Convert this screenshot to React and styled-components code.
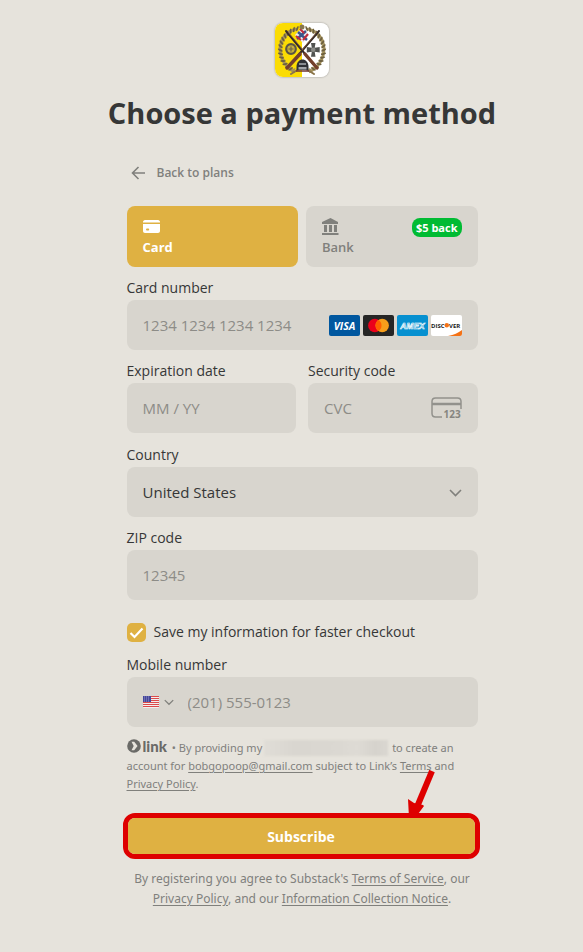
import React from 'react'
import styled, { createGlobalStyle } from 'styled-components'

const GlobalStyle = createGlobalStyle`
  :root {
    --page: #e6e3dc;
    --field: #d8d5ce;
    --gold: #dfb142;
    --ink: #363737;
    --grey: #80807c;
    --green: #00bb33;
    --red: #de0000;
  }

  * {
    box-sizing: border-box;
  }

  body {
    margin: 0;
    background-color: var(--page);
    color: var(--ink);
    font-family: 'Open Sans', 'Noto Sans', sans-serif;
    font-size: 14px;
  }

  button,
  input,
  select {
    font: inherit;
    color: inherit;
  }
`

export default function App() {
  return (
    <>
      <GlobalStyle />
      <Page>
        <PublicationLogo />
        <Title>Choose a payment method</Title>
        <Column>
          <BackLink href="#plans">
            <ArrowLeftIcon />
            Back to plans
          </BackLink>

          <form>
            <MethodRow>
              <MethodButton type="button" $active>
                <CardIcon />
                Card
              </MethodButton>
              <MethodButton type="button">
                <BankIcon />
                Bank
                <Badge>$5 back</Badge>
              </MethodButton>
            </MethodRow>

            <Label htmlFor="number">Card number</Label>
            <Field>
              <Input id="number" placeholder="1234 1234 1234 1234" />
              <Brands>
                <VisaLogo />
                <MastercardLogo />
                <AmexLogo />
                <DiscoverLogo />
              </Brands>
            </Field>

            <SplitRow>
              <div>
                <Label htmlFor="expiry">Expiration date</Label>
                <Field>
                  <Input id="expiry" placeholder="MM / YY" />
                </Field>
              </div>
              <div>
                <Label htmlFor="cvc">Security code</Label>
                <Field>
                  <Input id="cvc" placeholder="CVC" />
                  <CvcIcon />
                </Field>
              </div>
            </SplitRow>

            <Label htmlFor="country">Country</Label>
            <Field>
              <Select id="country" defaultValue="US">
                <option value="US">United States</option>
              </Select>
              <ChevronIcon size={13} />
            </Field>

            <Label htmlFor="zip">ZIP code</Label>
            <Field>
              <Input id="zip" placeholder="12345" />
            </Field>

            <SaveRow>
              <Checkbox type="checkbox" defaultChecked />
              Save my information for faster checkout
            </SaveRow>

            <Label htmlFor="phone">Mobile number</Label>
            <Field>
              <FlagButton type="button" aria-label="United States">
                <FlagIcon />
                <ChevronIcon size={10} />
              </FlagButton>
              <Input id="phone" type="tel" placeholder="(201) 555-0123" />
            </Field>

            <LinkTerms>
              <LinkLogo />
              <LinkName>link</LinkName> • By providing my
              <Redacted /> to create an
              <br />
              account for <a href="#account">bobgopoop@gmail.com</a> subject to
              Link’s <a href="#terms">Terms</a> and
              <br />
              <a href="#privacy">Privacy Policy</a>.
            </LinkTerms>

            <SubmitFrame>
              <SubmitButton type="submit">Subscribe</SubmitButton>
              <Pointer />
            </SubmitFrame>
          </form>

          <Footnote>
            By registering you agree to Substack's{' '}
            <a href="#tos">Terms of Service</a>, our
            <br />
            <a href="#privacy-policy">Privacy Policy</a>, and our{' '}
            <a href="#notice">Information Collection Notice</a>.
          </Footnote>
        </Column>
      </Page>
    </>
  )
}

function PublicationLogo() {
  const angles = [-76, -66, -56, -46, -36, -26, -16, -6, 4, 14, 24, 34, 44, 54, 64]
  return (
    <LogoBox>
      <svg width="54" height="54" viewBox="0 0 54 54" aria-hidden="true">
        <rect width="54" height="54" fill="#fff" />
        <rect width="27" height="54" fill="#fbdc04" />
        {[-1, 1].map((side) => (
          <g key={side} transform={`translate(27 0) scale(${side} 1)`}>
            <path
              d="M5 6C15 7 23 16 22 28C21 38 15 46 7 49"
              fill="none"
              stroke="#a3905a"
              strokeWidth="2.500"
            />
            {angles.map((angle) => {
              const a = (angle * Math.PI) / 180
              const x = 1 + 20.5 * Math.cos(a)
              const y = 27 + 21.5 * Math.sin(a)
              return (
                <g key={angle} transform={`translate(${x} ${y}) rotate(${angle - 35})`}>
                  <ellipse cx="1" cy="-1" rx="2.800" ry="0.900" fill="#6d6040" />
                  <ellipse cx="-1" cy="1" rx="2.400" ry="0.900" fill="#a4925b" />
                </g>
              )
            })}
          </g>
        ))}
        <circle cx="16" cy="26" r="4.800" fill="#c6b13c" stroke="#5a5546" strokeWidth="2.200" />
        <path d="M13.500 26h5M16 23.500v5" stroke="#6b634a" strokeWidth="1.200" />
        <path
          d="M36 20h4.500l-.8 4.800 5-.8v5.500l-5-.8.8 5H36l.8-5-5 .8V24l5 .8z"
          fill="#515351"
        />
        <circle cx="38.200" cy="26.800" r="2.200" fill="#8b8c88" />
        <g strokeLinecap="round" fill="none">
          <path d="M11 8L40 43" stroke="#352b27" strokeWidth="2" />
          <path d="M44 8L14 43" stroke="#352b27" strokeWidth="2" />
          <path d="M30 31L42 45" stroke="#74402c" strokeWidth="3.400" />
          <path d="M25 31L12 45" stroke="#74402c" strokeWidth="3.400" />
          <path d="M13 9L28 27M42 9L27 27" stroke="#8b6044" strokeWidth="0.800" />
          <path d="M16 51L24 46M39 51L31 46" stroke="#8a7449" strokeWidth="2" />
        </g>
        <path d="M27 5l7 7-6 8-8-8z" fill="#e9e7ed" />
        <path d="M23 9l9 8M31 8l-9 8" stroke="#3a558c" strokeWidth="2.500" />
        <path d="M25 6l4 4M33 11l-5 6M21 13l5 4" stroke="#c22b3b" strokeWidth="2" />
        <circle cx="27" cy="4" r="2.500" fill="#87764d" />
        <path d="M21.500 44c0-10 12-10 12 0v3h-12z" fill="#303237" />
        <path d="M24 40h7v2h-7z" fill="#898d92" />
        <path d="M23.500 44h8v2.500h-8z" fill="#a2a5aa" />
        <path d="M21 48h13" stroke="#6c3432" strokeWidth="1.500" />
      </svg>
    </LogoBox>
  )
}

function ArrowLeftIcon() {
  return (
    <svg width="15" height="14" viewBox="0 0 15 14" fill="none" aria-hidden="true">
      <path d="M14 7H1.500M7.500 1L1.500 7l6 6" stroke="#80807c" strokeWidth="1.600" />
    </svg>
  )
}

function CardIcon() {
  return (
    <svg width="17" height="17" viewBox="0 0 17 17" fill="#fff" aria-hidden="true">
      <path d="M0 4.500V4c0-1 .8-2 2-2h13c1.200 0 2 1 2 2v.5z" />
      <path
        fillRule="evenodd"
        d="M0 6h17v7c0 1.200-.8 2-2 2H2c-1.200 0-2-.8-2-2zM4 10.500a1 1 0 0 0 0 2h1.200a1 1 0 0 0 0-2z"
      />
    </svg>
  )
}

function BankIcon() {
  return (
    <svg width="17" height="17" viewBox="0 0 17 17" fill="#80807c" aria-hidden="true">
      <path d="M8.500 0L16 4v2H0V4zM2 7h3v7H2zM7 7h3v7H7zM12 7h3v7h-3zM0 15h16.500v2H0z" />
    </svg>
  )
}

function VisaLogo() {
  return (
    <svg width="31" height="21" viewBox="0 0 31 21" role="img" aria-label="Visa">
      <rect width="31" height="21" rx="2" fill="#00579f" />
      <text
        x="15.500"
        y="14.500"
        fill="#fff"
        fontFamily="Open Sans"
        fontSize="10.500"
        fontStyle="italic"
        fontWeight="700"
        textAnchor="middle"
      >
        VISA
      </text>
    </svg>
  )
}

function MastercardLogo() {
  return (
    <svg width="31" height="21" viewBox="0 0 31 21" role="img" aria-label="Mastercard">
      <rect width="31" height="21" rx="2" fill="#252525" />
      <circle cx="11.800" cy="10.500" r="6.700" fill="#eb001b" />
      <circle cx="19.200" cy="10.500" r="6.700" fill="#f79e1b" />
      <path d="M15.500 4.900a6.700 6.700 0 0 1 0 11.200a6.700 6.700 0 0 1 0-11.200z" fill="#ff5f00" />
    </svg>
  )
}

function AmexLogo() {
  return (
    <svg width="31" height="21" viewBox="0 0 31 21" role="img" aria-label="Amex">
      <rect width="31" height="21" rx="2" fill="#0690d0" />
      <text
        x="15.500"
        y="13.500"
        fill="#0690d0"
        stroke="#fff"
        strokeWidth="0.600"
        fontFamily="Liberation Sans"
        fontSize="8.500"
        fontStyle="italic"
        fontWeight="700"
        textAnchor="middle"
      >
        AMEX
      </text>
    </svg>
  )
}

function DiscoverLogo() {
  return (
    <svg width="31" height="21" viewBox="0 0 31 21" role="img" aria-label="Discover">
      <rect width="31" height="21" rx="2" fill="#fff" />
      <path d="M31 15v4a2 2 0 0 1-2 2H17c6-1 10-3 14-6z" fill="#f47216" />
      <g fill="#222" fontFamily="Open Sans" fontSize="6" fontWeight="700">
        <text x="0" y="12.500">DISC</text>
        <text x="18" y="12.500">VER</text>
      </g>
      <circle cx="15.800" cy="10.300" r="2.200" fill="#f47216" />
    </svg>
  )
}

function CvcIcon() {
  return (
    <svg width="31" height="24" viewBox="0 -1 31 24" fill="none" aria-hidden="true">
      <path
        d="M11 20H4.500C2.500 20 1 18.500 1 16.500V4.500C1 2.500 2.500 1 4.500 1h22C28.500 1 30 2.500 30 4.500V12"
        stroke="#92918c"
        strokeWidth="1.500"
      />
      <path d="M1 7h29" stroke="#92918c" strokeWidth="2.500" />
      <text x="12.500" y="21" fill="#868580" fontFamily="Open Sans" fontSize="10" fontWeight="700">
        123
      </text>
    </svg>
  )
}

function ChevronIcon({ size }) {
  return (
    <Chevron width={size} height={size} viewBox="0 0 13 13" aria-hidden="true">
      <path d="M1 4l5.500 5.500L12 4" fill="none" stroke="#80807c" strokeWidth="1.600" />
    </Chevron>
  )
}

function FlagIcon() {
  return (
    <svg width="16" height="12" viewBox="0 0 16 12" aria-hidden="true">
      <rect width="16" height="12" rx="1" fill="#f3eeee" />
      {[0, 2, 4, 6, 8, 10].map((y) => (
        <rect key={y} y={y} width="16" height="1" fill="#dc4a4a" />
      ))}
      <rect width="8" height="6" fill="#45479b" />
      {[1, 3, 5].map((y) => (
        <path key={y} d={`M1 ${y}h6`} stroke="#b9badb" strokeWidth="0.700" strokeDasharray="1 1" />
      ))}
    </svg>
  )
}

function LinkLogo() {
  return (
    <InlineMark width="14" height="14" viewBox="0 0 14 14" aria-hidden="true">
      <circle cx="7" cy="7" r="6.800" fill="#6a6a67" />
      <path d="M4.500 2.800h2.700L10.600 7l-3.400 4.200H4.500L6.700 7z" fill="#e6e3dc" />
    </InlineMark>
  )
}

function Pointer() {
  return (
    <PointerSvg width="33" height="48" viewBox="0 0 33 48" aria-hidden="true">
      <path d="M30 1L15 37" stroke="#de0000" strokeWidth="6" />
      <path d="M6 29l6 4 9 2 1 1-9 12H7z" fill="#de0000" />
    </PointerSvg>
  )
}

const Page = styled.main`
  display: flex;
  flex-direction: column;
  align-items: center;
  padding: 23px 0 44px 21px;
`

const LogoBox = styled.div`
  width: 54px;
  height: 54px;
  overflow: hidden;
  border-radius: 8px;
  box-shadow: 0 0 2px rgba(0, 0, 0, 0.4);
`

const Title = styled.h1`
  margin: 14px 0 0;
  font-size: 29px;
  font-weight: 700;
  line-height: 44px;
`

const Column = styled.div`
  width: 100%;
  max-width: 351px;
`

const BackLink = styled.a`
  display: flex;
  align-items: center;
  gap: 11px;
  margin: 28px 0 23px 4px;
  color: var(--grey);
  font-size: 12px;
  font-weight: 600;
  line-height: 20px;
  text-decoration: none;
`

const MethodRow = styled.div`
  display: grid;
  grid-template-columns: 1fr 1fr;
  gap: 8px;
`

const MethodButton = styled.button`
  position: relative;
  display: flex;
  flex-direction: column;
  align-items: flex-start;
  gap: 2px;
  height: 61px;
  padding: 12px 16px 8px;
  border: 0;
  border-radius: 8px;
  background-color: ${({ $active }) => ($active ? 'var(--gold)' : 'var(--field)')};
  color: ${({ $active }) => ($active ? '#fff' : 'var(--grey)')};
  font-size: 13px;
  font-weight: ${({ $active }) => ($active ? 700 : 600)};
  line-height: 20px;
`

const Badge = styled.span`
  position: absolute;
  top: 12px;
  right: 16px;
  padding: 0 4px;
  border-radius: 8px;
  background-color: var(--green);
  color: #fff;
  font-size: 11px;
  font-weight: 700;
  line-height: 19px;
`

const Label = styled.label`
  display: block;
  padding: 11px 0 2px;
  line-height: 20px;
`

const Field = styled.div`
  display: flex;
  align-items: center;
  height: 50px;
  padding: 0 16px;
  border-radius: 8px;
  background-color: var(--field);
  font-size: 15px;
`

const Input = styled.input`
  flex: 1;
  min-width: 0;
  padding: 0;
  border: 0;
  outline: 0;
  background: none;

  &::placeholder {
    color: #8d8c87;
    opacity: 1;
  }
`

const Brands = styled.div`
  display: flex;
  gap: 3px;
`

const SplitRow = styled.div`
  display: grid;
  grid-template-columns: repeat(2, minmax(0, 1fr));
  gap: 12px;
  margin-bottom: 1px;
`

const Select = styled.select`
  flex: 1;
  padding: 0;
  border: 0;
  outline: 0;
  appearance: none;
  background: none;
`

const Chevron = styled.svg`
  flex-shrink: 0;
  pointer-events: none;
`

const SaveRow = styled.label`
  display: flex;
  align-items: center;
  gap: 8px;
  margin: 22px 0 2px;
  line-height: 20px;
`

const Checkbox = styled.input`
  width: 19px;
  height: 19px;
  margin: 0;
  appearance: none;
  border-radius: 5px;
  background-color: var(--field);

  &:checked {
    background: var(--gold)
      url("data:image/svg+xml,%3Csvg xmlns='http://www.w3.org/2000/svg' viewBox='0 0 19 19'%3E%3Cpath d='M3.500 10l4 4L15.500 5.500' fill='none' stroke='white' stroke-width='2.200'/%3E%3C/svg%3E");
  }
`

const FlagButton = styled.button`
  display: flex;
  align-items: center;
  gap: 5px;
  margin-right: 14px;
  padding: 0;
  border: 0;
  background: none;
`

const LinkTerms = styled.p`
  margin: 11px 0 20px;
  color: var(--grey);
  font-family: 'Noto Sans', sans-serif;
  font-size: 11px;
  line-height: 18px;

  a {
    color: inherit;
    text-underline-offset: 2px;
  }
`

const InlineMark = styled.svg`
  margin-right: 2px;
  vertical-align: -1px;
`

const LinkName = styled.span`
  margin-right: 2px;
  color: #6a6a67;
  font-family: Lato, sans-serif;
  font-size: 15px;
  font-weight: 900;
  line-height: 16px;
`

const Redacted = styled.span`
  display: inline-block;
  width: 124px;
  height: 16px;
  margin: 0 1px 0 2px;
  vertical-align: -4px;
  background: linear-gradient(90deg, #e0ddd7, #d9d6d0 25%, #dbd8d2 60%, #dedbd5 75%, #d6d3cd 90%, #dad7d1);
  filter: blur(1px);
`

const SubmitFrame = styled.div`
  position: relative;
  margin: 0 -2px 0 -4px;
  border: 5px solid var(--red);
  border-radius: 12px;
`

const SubmitButton = styled.button`
  display: block;
  width: 100%;
  height: 36px;
  border: 0;
  border-radius: 7px;
  background-color: var(--gold);
  color: #fff;
  font-weight: 700;
`

const PointerSvg = styled.svg`
  position: absolute;
  top: -48px;
  right: 40px;
  pointer-events: none;
`

const Footnote = styled.p`
  margin: 10px 0 0;
  color: var(--grey);
  font-family: 'Noto Sans', sans-serif;
  font-size: 12px;
  line-height: 20px;
  text-align: center;

  a {
    color: inherit;
    text-underline-offset: 2px;
  }
`
